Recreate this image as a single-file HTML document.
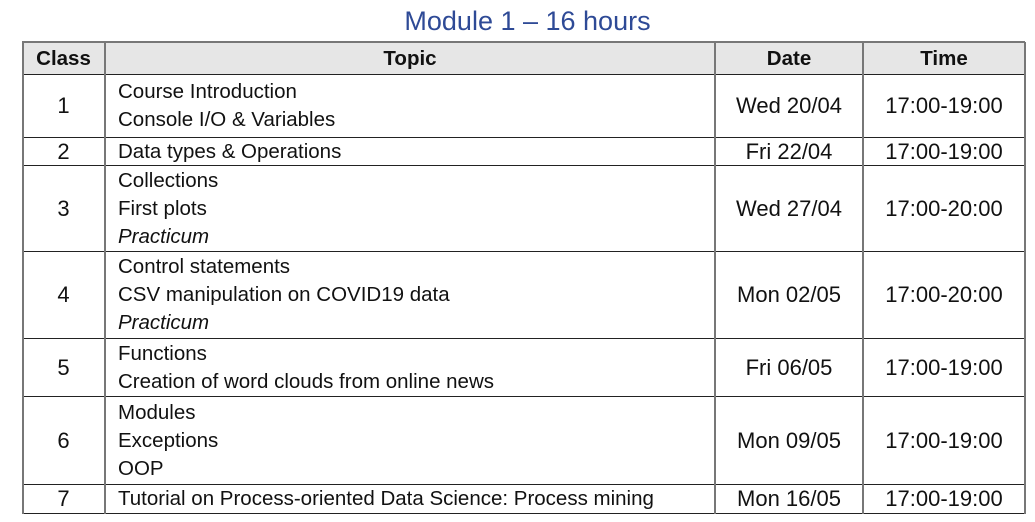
<!DOCTYPE html>
<html><head><style>
body{margin:0;width:1035px;height:522px;background:#fff;font-family:"Liberation Sans",sans-serif;color:#111;position:relative;overflow:hidden}
.t{position:absolute;left:0;width:1035px;text-align:center;top:6px;font-size:27px;color:#2e4a96;padding-left:20px;box-sizing:border-box}
.h{position:absolute;height:1px;background:#222;left:22px;width:1003px}
.v{position:absolute;width:2px;background:#777;top:42px;height:472px}
.c{position:absolute;display:flex;flex-direction:column;justify-content:center;font-size:20.5px;line-height:28px}
.m{align-items:center;text-align:center}
.d{font-size:22px}
i{font-style:italic}
</style></head><body>
<div class="t">Module 1 – 16 hours</div>
<div style="position:absolute;left:22px;top:42px;width:1003px;height:32px;background:#e6e6e6"></div>
<div class="h" style="top:41px;background:#777;height:2px"></div>
<div class="h" style="top:74px"></div>
<div class="h" style="top:137px"></div>
<div class="h" style="top:165px"></div>
<div class="h" style="top:251px"></div>
<div class="h" style="top:338px"></div>
<div class="h" style="top:396px"></div>
<div class="h" style="top:484px"></div>
<div class="h" style="top:513px"></div>
<div class="v" style="left:22px"></div>
<div class="v" style="left:104px"></div>
<div class="v" style="left:714px"></div>
<div class="v" style="left:862px"></div>
<div class="v" style="left:1024px"></div>

<div class="c m" style="left:22px;width:83px;top:42px;height:34px;font-weight:bold">Class</div>
<div class="c m" style="left:105px;width:610px;top:42px;height:34px;font-weight:bold">Topic</div>
<div class="c m" style="left:715px;width:148px;top:42px;height:34px;font-weight:bold">Date</div>
<div class="c m" style="left:863px;width:162px;top:42px;height:34px;font-weight:bold">Time</div>

<div class="c m d" style="left:22px;width:83px;top:75px;height:62px">1</div>
<div class="c" style="left:118px;top:75px;height:62px"><span>Course Introduction</span><span>Console I/O &amp; Variables</span></div>
<div class="c m d" style="left:715px;width:148px;top:75px;height:62px">Wed 20/04</div>
<div class="c m d" style="left:863px;width:162px;top:75px;height:62px">17:00-19:00</div>

<div class="c m d" style="left:22px;width:83px;top:138px;height:27px">2</div>
<div class="c" style="left:118px;top:138px;height:27px">Data types &amp; Operations</div>
<div class="c m d" style="left:715px;width:148px;top:138px;height:27px">Fri 22/04</div>
<div class="c m d" style="left:863px;width:162px;top:138px;height:27px">17:00-19:00</div>

<div class="c m d" style="left:22px;width:83px;top:166px;height:85px">3</div>
<div class="c" style="left:118px;top:166px;height:85px"><span>Collections</span><span>First plots</span><i>Practicum</i></div>
<div class="c m d" style="left:715px;width:148px;top:166px;height:85px">Wed 27/04</div>
<div class="c m d" style="left:863px;width:162px;top:166px;height:85px">17:00-20:00</div>

<div class="c m d" style="left:22px;width:83px;top:252px;height:86px">4</div>
<div class="c" style="left:118px;top:252px;height:86px"><span>Control statements</span><span>CSV manipulation on COVID19 data</span><i>Practicum</i></div>
<div class="c m d" style="left:715px;width:148px;top:252px;height:86px">Mon 02/05</div>
<div class="c m d" style="left:863px;width:162px;top:252px;height:86px">17:00-20:00</div>

<div class="c m d" style="left:22px;width:83px;top:339px;height:57px">5</div>
<div class="c" style="left:118px;top:339px;height:57px"><span>Functions</span><span>Creation of word clouds from online news</span></div>
<div class="c m d" style="left:715px;width:148px;top:339px;height:57px">Fri 06/05</div>
<div class="c m d" style="left:863px;width:162px;top:339px;height:57px">17:00-19:00</div>

<div class="c m d" style="left:22px;width:83px;top:397px;height:87px">6</div>
<div class="c" style="left:118px;top:397px;height:87px"><span>Modules</span><span>Exceptions</span><span>OOP</span></div>
<div class="c m d" style="left:715px;width:148px;top:397px;height:87px">Mon 09/05</div>
<div class="c m d" style="left:863px;width:162px;top:397px;height:87px">17:00-19:00</div>

<div class="c m d" style="left:22px;width:83px;top:485px;height:28px">7</div>
<div class="c" style="left:118px;top:485px;height:28px">Tutorial on Process-oriented Data Science: Process mining</div>
<div class="c m d" style="left:715px;width:148px;top:485px;height:28px">Mon 16/05</div>
<div class="c m d" style="left:863px;width:162px;top:485px;height:28px">17:00-19:00</div>
</body></html>
